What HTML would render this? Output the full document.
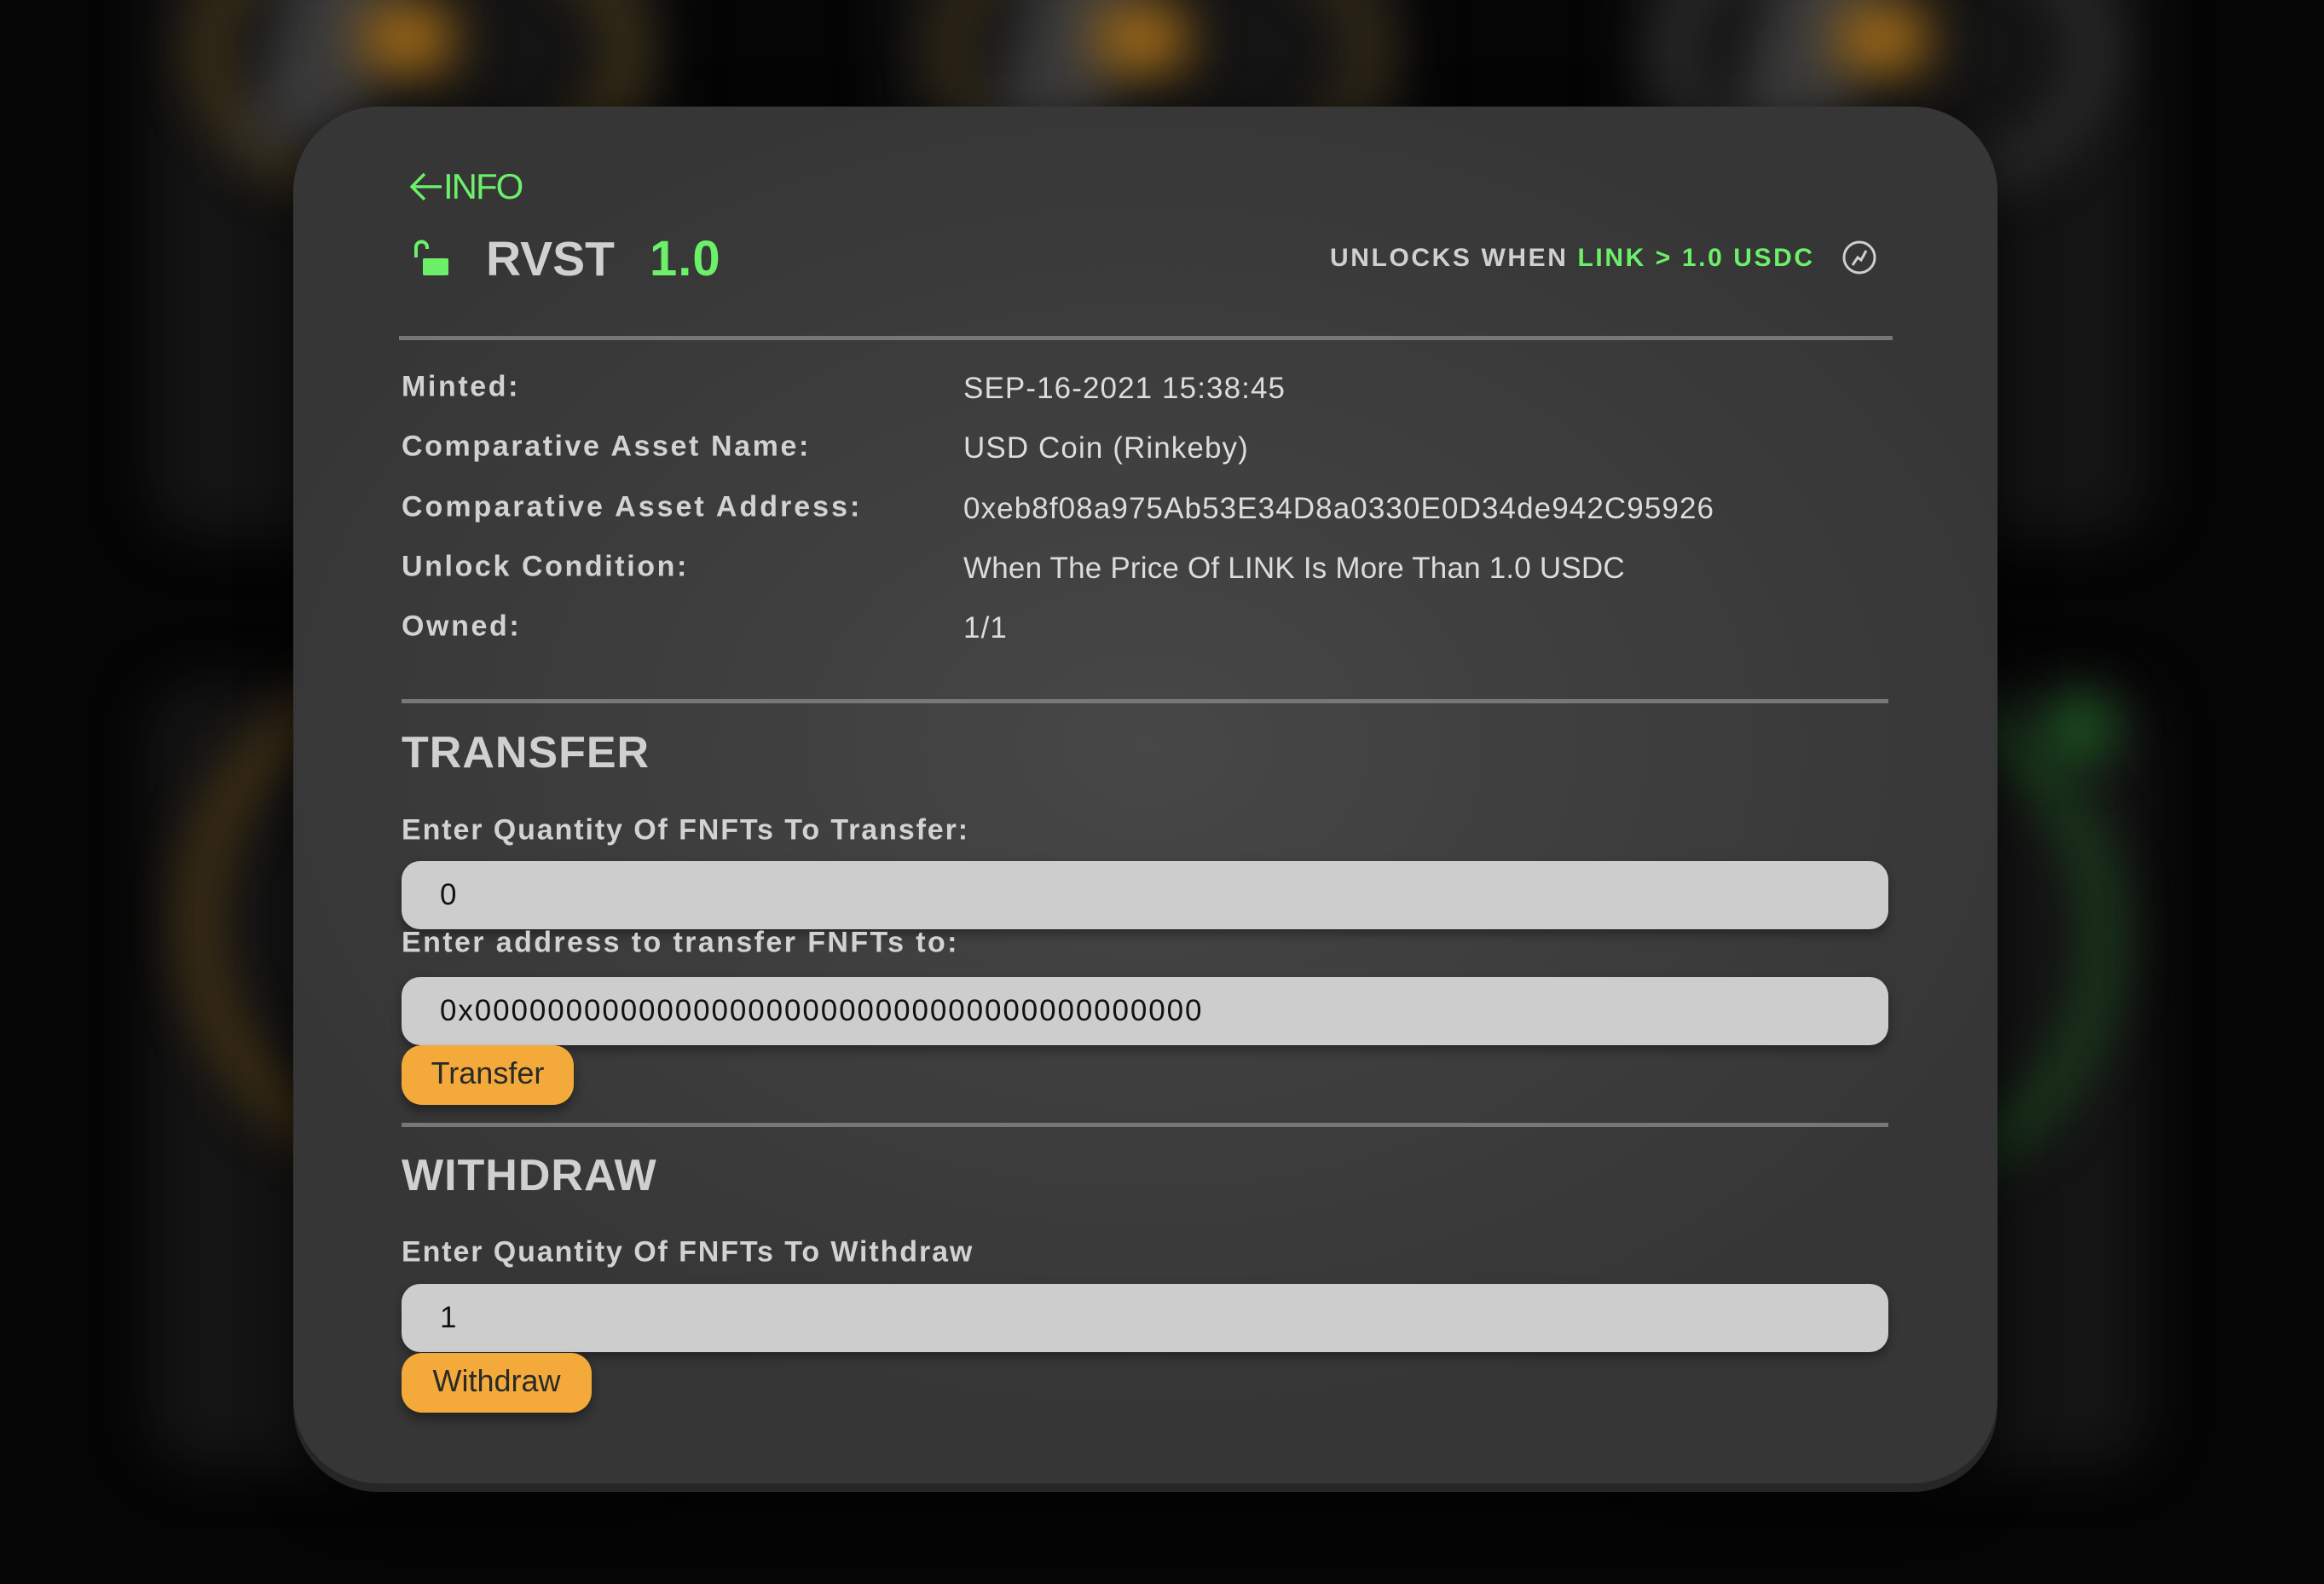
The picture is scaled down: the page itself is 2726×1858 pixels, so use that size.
<!DOCTYPE html>
<html><head><meta charset="utf-8"><style>
*{margin:0;padding:0;box-sizing:border-box}
html,body{width:2726px;height:1858px;overflow:hidden;background:#050505;font-family:"Liberation Sans",sans-serif}
.bg{position:absolute;filter:blur(30px)}
.card{position:absolute;left:344px;top:125px;width:1999px;height:1615px;border-radius:100px;
background:radial-gradient(ellipse 1100px 800px at 1000px 750px,#474747 0%,#3d3d3d 55%,#363636 100%);
box-shadow:0 10px 0 #262626, 0 20px 60px rgba(0,0,0,.7)}
.a{position:absolute;white-space:nowrap}
.g{color:#6cf06a}
.lbl{position:absolute;left:127px;font-weight:bold;font-size:34px;letter-spacing:2.6px;color:#d2d2d2;transform:translateY(-50%);white-space:nowrap}
.lbl.e{letter-spacing:1.9px}
.val{position:absolute;left:786px;font-size:35px;letter-spacing:1.1px;color:#dcdcdc;transform:translateY(-50%);white-space:nowrap}
.hr{position:absolute;left:127px;width:1744px;height:5px;background:#777}
.h2{position:absolute;left:127px;font-weight:bold;font-size:52px;color:#d0d0d0;transform:translateY(-50%);letter-spacing:1px}
.inp{position:absolute;left:127px;width:1744px;height:80px;background:#cdcdcd;border-radius:22px;box-shadow:0 6px 12px rgba(0,0,0,.35);font-size:35px;color:#111;padding-left:45px;line-height:80px;letter-spacing:1.9px}
.btn{position:absolute;left:127px;height:70px;background:#f4aa3a;border-radius:24px;font-size:36px;color:#2a2a2a;line-height:66px;text-align:center;box-shadow:0 8px 12px rgba(0,0,0,.35)}
</style></head><body>
<div class="bg" style="left:174px;top:-120px;width:610px;height:750px;background:#141414;border-radius:60px"></div>
<div class="bg" style="left:1043px;top:-120px;width:610px;height:750px;background:#141414;border-radius:60px"></div>
<div class="bg" style="left:1912px;top:-120px;width:610px;height:750px;background:#141414;border-radius:60px"></div>
<div class="bg" style="left:174px;top:800px;width:610px;height:920px;background:#141414;border-radius:60px"></div>
<div class="bg" style="left:1912px;top:800px;width:610px;height:920px;background:#141414;border-radius:60px"></div>
<div class="bg" style="left:230px;top:-120px;width:520px;height:360px;border-radius:50%;border:28px solid #5a4418"></div>
<div class="bg" style="left:1100px;top:-120px;width:520px;height:360px;border-radius:50%;border:28px solid #4a3a18"></div>
<div class="bg" style="left:1950px;top:-120px;width:520px;height:360px;border-radius:50%;border:28px solid #3a3a3a"></div>
<div class="bg" style="left:320px;top:-60px;width:130px;height:230px;background:#3a3a3a;transform:skewX(-15deg)"></div>
<div class="bg" style="left:1190px;top:-60px;width:130px;height:230px;background:#3a3a3a;transform:skewX(-15deg)"></div>
<div class="bg" style="left:2060px;top:-60px;width:130px;height:230px;background:#3a3a3a;transform:skewX(-15deg)"></div>
<div class="bg" style="left:426px;top:5px;width:104px;height:80px;background:#a06a18;border-radius:14px"></div>
<div class="bg" style="left:1287px;top:5px;width:104px;height:80px;background:#a06a18;border-radius:14px"></div>
<div class="bg" style="left:2156px;top:5px;width:104px;height:80px;background:#a06a18;border-radius:14px"></div>
<div class="bg" style="left:220px;top:780px;width:600px;height:600px;border-radius:50%;border:26px solid #6a4a14"></div>
<div class="bg" style="left:1880px;top:800px;width:600px;height:600px;border-radius:50%;border:26px solid #1f5a22"></div>
<div class="bg" style="left:2405px;top:820px;width:70px;height:70px;border-radius:50%;background:#1f6a24"></div>

<div class="card">
  <div class="a g" style="left:136px;top:70px;font-size:42px;letter-spacing:-2px;line-height:48px">
    <svg width="40" height="36" viewBox="0 0 40 36" style="vertical-align:-4px"><path d="M38 18H4M18 3L3 18l15 15" fill="none" stroke="#6cf06a" stroke-width="3.5"/></svg>INFO</div>
  <svg class="a" style="left:139px;top:155px" width="44" height="44" viewBox="0 0 44 44">
    <path d="M5 22V10a6.5 6.5 0 0 1 13 0v2" fill="none" stroke="#6cf06a" stroke-width="4"/>
    <rect x="13" y="23" width="30" height="20" rx="2" fill="#6cf06a"/></svg>
  <div class="a" style="left:226px;top:146px;font-size:57px;font-weight:bold;color:#d0d0d0;line-height:66px;letter-spacing:0px">RVST</div>
  <div class="a g" style="left:418px;top:146px;font-size:58px;font-weight:bold;line-height:66px;letter-spacing:1px">1.0</div>
  <div class="a" style="left:1216px;top:158px;font-size:30px;font-weight:bold;letter-spacing:2.6px;color:#d0d0d0;line-height:40px">UNLOCKS WHEN <span class="g">LINK &gt; 1.0 USDC</span></div>
  <svg class="a" style="left:1816px;top:156px" width="42" height="42" viewBox="0 0 42 42"><circle cx="21" cy="21" r="18" fill="none" stroke="#cfcfcf" stroke-width="3"/><path d="M13 30l6-9 4 3 6-11" fill="none" stroke="#cfcfcf" stroke-width="3"/></svg>
  <div class="hr" style="left:124px;width:1752px;top:269px"></div>

  <div class="lbl" style="top:329px">Minted:</div><div class="val" style="top:331px">SEP-16-2021 15:38:45</div>
  <div class="lbl" style="top:399px">Comparative Asset Name:</div><div class="val" style="top:401px">USD Coin (Rinkeby)</div>
  <div class="lbl" style="top:470px;letter-spacing:3px">Comparative Asset Address:</div><div class="val" style="top:472px">0xeb8f08a975Ab53E34D8a0330E0D34de942C95926</div>
  <div class="lbl" style="top:540px">Unlock Condition:</div><div class="val" style="top:542px;letter-spacing:0.2px">When The Price Of LINK Is More Than 1.0 USDC</div>
  <div class="lbl" style="top:610px">Owned:</div><div class="val" style="top:612px">1/1</div>

  <div class="hr" style="top:695px"></div>
  <div class="h2" style="top:758px">TRANSFER</div>
  <div class="lbl e" style="top:849px">Enter Quantity Of FNFTs To Transfer:</div>
  <div class="inp" style="top:885px">0</div>
  <div class="lbl e" style="top:981px;letter-spacing:2.4px">Enter address to transfer FNFTs to:</div>
  <div class="inp" style="top:1021px">0x0000000000000000000000000000000000000000</div>
  <div class="btn" style="top:1101px;width:202px">Transfer</div>
  <div class="hr" style="top:1192px"></div>
  <div class="h2" style="top:1254px">WITHDRAW</div>
  <div class="lbl e" style="top:1344px">Enter Quantity Of FNFTs To Withdraw</div>
  <div class="inp" style="top:1381px">1</div>
  <div class="btn" style="top:1462px;width:223px">Withdraw</div>
</div>
</body></html>
